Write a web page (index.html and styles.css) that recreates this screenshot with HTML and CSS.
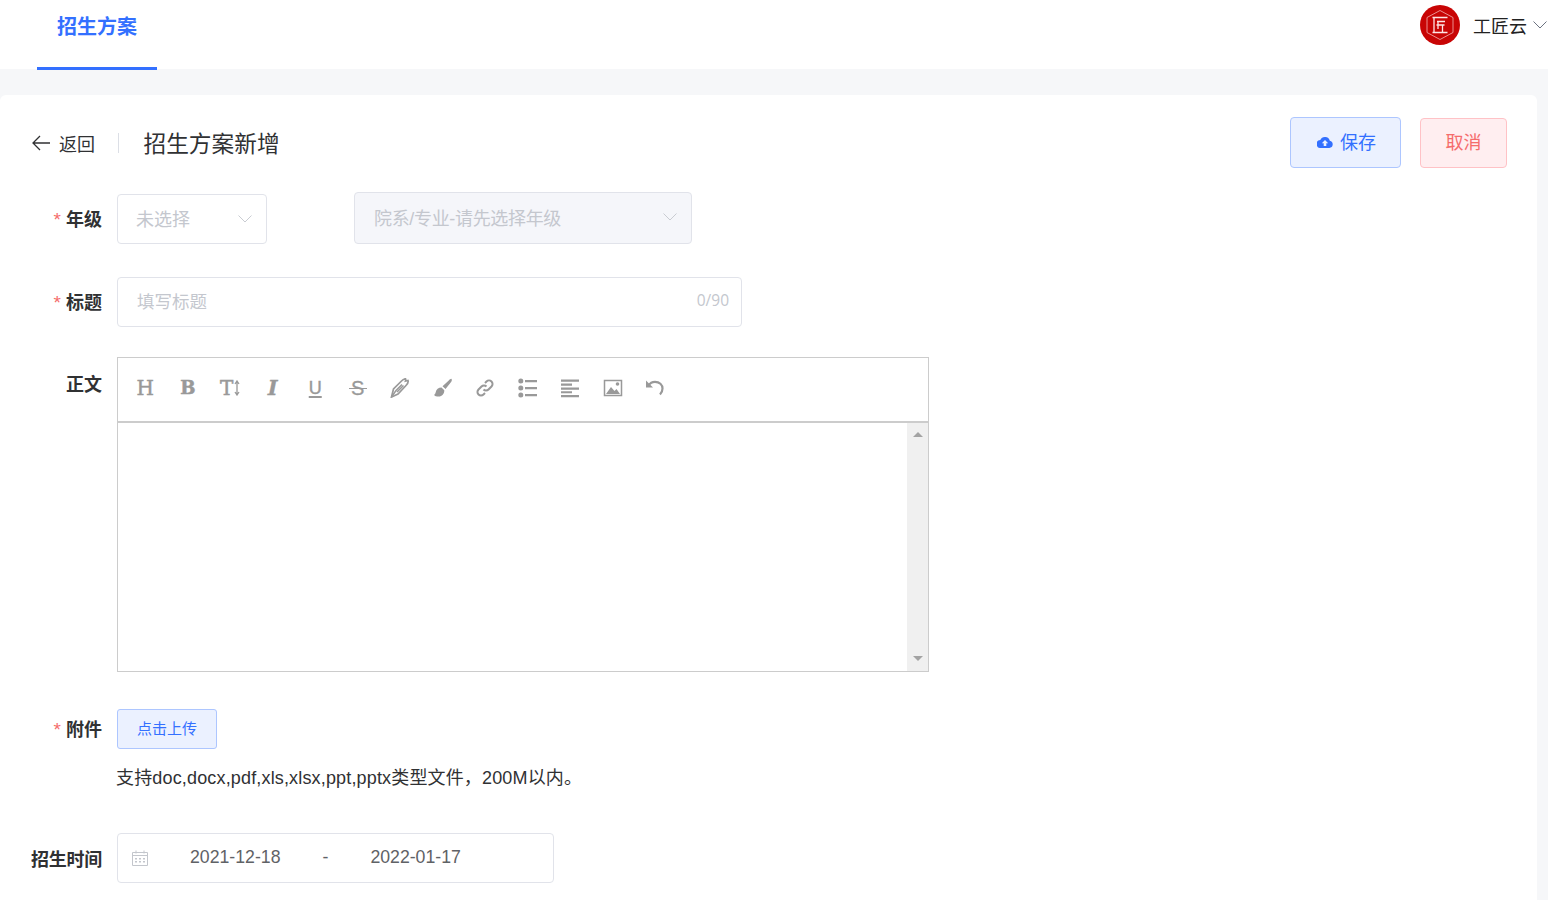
FILE: index.html
```html
<!DOCTYPE html>
<html lang="zh-CN">
<head>
    <meta charset="UTF-8">
    <title>招生方案新增</title>
    <link rel="stylesheet" href="styles.css">
</head>
<body>
    <header class="topbar">
        <a class="tab">招生方案</a>
        <div class="user">
            <svg class="avatar" viewBox="0 0 40 40">
                <circle cx="20" cy="20" r="20" fill="#c80505"/>
                <path d="M20 5.500 33 12.500v15L20 34.500 7 27.500v-15z" fill="none" stroke="#ea8f8f" stroke-width="1"/>
                <path d="M12.500 12.500h15M14 12.500v15M12.500 27.500h15M17 16.500h8M18 16.500v7.500M16.500 20h8M22.500 20v7.500" fill="none" stroke="#fde5e5" stroke-width="1.300"/>
            </svg>
            <span class="user-name">工匠云</span>
            <svg class="chevron chevron-dark" viewBox="0 0 14 8"><path d="M.5.5 7 7l6.500-6.500"/></svg>
        </div>
    </header>

    <main class="card">
        <div class="page-head">
            <a class="back">
                <svg class="back-arrow" viewBox="0 0 18 16"><path d="M8 1 1 8l7 7M1 8h17"/></svg>
                返回
            </a>
            <h1 class="page-title">招生方案新增</h1>
            <div class="actions">
                <button class="btn btn-save">
                    <svg class="cloud" viewBox="0 0 16 12"><path d="M12.800 4.700A5 4.700 0 0 0 3.300 4 3.900 3.900 0 0 0 4 12h8.300a3.700 3.700 0 0 0 .5-7.300zM9.300 7.300V10H6.700V7.300H4.800L8 4.100l3.200 3.200z"/></svg>
                    保存
                </button>
                <button class="btn btn-cancel">取消</button>
            </div>
        </div>

        <div class="row row-grade">
            <label class="label required">年级</label>
            <div class="select select-grade">
                <span>未选择</span>
                <svg class="chevron" viewBox="0 0 14 8"><path d="M.5.5 7 7l6.500-6.500"/></svg>
            </div>
            <div class="select select-major">
                <span>院系/专业-请先选择年级</span>
                <svg class="chevron" viewBox="0 0 14 8"><path d="M.5.5 7 7l6.500-6.500"/></svg>
            </div>
        </div>

        <div class="row row-title">
            <label class="label required">标题</label>
            <div class="input-title">
                <span class="placeholder">填写标题</span>
                <span class="count">0/90</span>
            </div>
        </div>

        <div class="row row-editor">
            <label class="label">正文</label>
            <div class="editor">
                <div class="toolbar">
                    <span class="tool tool-heavy">H</span>
                    <span class="tool tool-bold">B</span>
                    <span class="tool tool-heavy">T<svg class="updown" viewBox="0 0 6 16"><path d="M3 1v14M1 4l2-3 2 3M1 12l2 3 2-3"/></svg></span>
                    <span class="tool tool-italic">I</span>
                    <span class="tool tool-under">U</span>
                    <span class="tool tool-strike">S</span>
                    <span class="tool"><svg class="icon" viewBox="0 0 20 20"><path d="M1.500 19 3.500 11 11.500 3c1.500-1.500 3-2 4-2.300.4 1 .3 1.500 0 2.300l2.500-.5c.5 1.500-.5 3.500-2 5l-8 8.500z" fill="none" stroke="#999" stroke-width="1.700"/><path d="M1.500 19 6 12.500l6-6M7 14l6.500-6.500" fill="none" stroke="#999" stroke-width="1.500"/></svg></span>
                    <span class="tool"><svg class="icon" viewBox="0 0 20 20"><path d="M18.500 1c.8.8.3 2.200-1 3.800l-5 6.200-3-2.800 6-5.500C17 1.300 18 .5 18.500 1z" fill="#999"/><path d="M8.500 9.500l2.800 2.700c.2 3.500-2.500 6.300-5.500 6.300-2 0-4.500-.5-4.500-1.500 0-.8 1-.8 1.400-2.800.5-2.800 2.800-4.700 5.800-4.700z" fill="#999"/></svg></span>
                    <span class="tool"><svg class="icon" viewBox="0 0 20 20"><path d="M8.500 11.500a3.500 3.500 0 0 0 5 0l3-3a3.500 3.500 0 0 0-5-5l-1.500 1.500M11.500 8.500a3.500 3.500 0 0 0-5 0l-3 3a3.500 3.500 0 0 0 5 5l1.500-1.500" fill="none" stroke="#999" stroke-width="2"/></svg></span>
                    <span class="tool"><svg class="icon" viewBox="0 0 20 20"><circle cx="2.800" cy="3" r="2.500" fill="#999"/><circle cx="2.800" cy="10" r="2.500" fill="#999"/><circle cx="2.800" cy="17" r="2.500" fill="#999"/><path d="M7 2h12v2.200H7zM7 9h12v2.200H7zM7 16h12v2.200H7z" fill="#999"/></svg></span>
                    <span class="tool"><svg class="icon" viewBox="0 0 20 20"><path d="M1 1.500h18v2.200H1zM1 5.500h11v2.200H1zM1 9.500h18v2.200H1zM1 13.200h11v2H1zM1 17h18v2.200H1z" fill="#999"/></svg></span>
                    <span class="tool"><svg class="icon" viewBox="0 0 20 20"><path d="M1.500 2.500h17v15h-17z" fill="none" stroke="#999" stroke-width="1.500"/><path d="M3 16l5-7 3.500 4 2-2 3.500 5z" fill="#999"/><circle cx="14.500" cy="6" r="1.800" fill="#999"/></svg></span>
                    <span class="tool"><svg class="icon" viewBox="0 0 20 20"><path d="M1 2.500v7h7z" fill="#999"/><path d="M3.500 7.500C5 5 7.500 3.800 10 3.800c4.500 0 7.500 3 7.500 6.700 0 2.500-1 4.500-2.500 6" fill="none" stroke="#999" stroke-width="2.200"/></svg></span>
                </div>
                <div class="editor-body">
                    <div class="scrollbar">
                        <i class="arrow-up"></i>
                        <i class="arrow-down"></i>
                    </div>
                </div>
            </div>
        </div>

        <div class="row row-upload">
            <label class="label required">附件</label>
            <button class="btn-upload">点击上传</button>
        </div>
        <p class="hint">支持doc,docx,pdf,xls,xlsx,ppt,pptx类型文件，200M以内。</p>

        <div class="row row-date">
            <label class="label">招生时间</label>
            <div class="date-range">
                <svg class="calendar" viewBox="0 0 16 16">
                    <path d="M.5 2.500h15v13H.5zM.5 5.500h15M4 .5v3M12 .5v3" fill="none" stroke="#c3c6cc"/>
                    <path d="M3 8h2v1.500H3zM7 8h2v1.500H7zM11 8h2v1.500h-2zM3 11h2v1.500H3zM7 11h2v1.500H7zM11 11h2v1.500h-2z" fill="#c3c6cc"/>
                </svg>
                <span class="date-start">2021-12-18</span>
                <span class="date-sep">-</span>
                <span class="date-end">2022-01-17</span>
            </div>
        </div>
    </main>
</body>
</html>
```

FILE: styles.css
```css
* {
    box-sizing: border-box;
}

html, body {
    height: 900px;
    overflow: hidden;
}

body {
    margin: 0;
    background: #f6f7f9;
    color: #303133;
    font-family: "Liberation Sans", "Noto Sans CJK SC", sans-serif;
    font-size: 18px;
}

button {
    font-family: inherit;
    cursor: pointer;
}

/* Top bar */
.topbar {
    height: 69px;
    background: #fff;
    display: flex;
    justify-content: space-between;
    padding-left: 37px;
}

.tab {
    width: 120px;
    height: 70px;
    border-bottom: 3px solid #3370ff;
    color: #3370ff;
    font-size: 20px;
    font-weight: 700;
    text-align: center;
    line-height: 54px;
}

.user {
    display: flex;
    align-items: center;
    height: 50px;
}

.avatar {
    width: 40px;
    height: 40px;
    margin-right: 13px;
}

.user-name {
    color: #222;
    margin-right: 6px;
}

.chevron {
    width: 14px;
    height: 8px;
    fill: none;
    stroke: #c9ccd2;
    stroke-width: 1;
}

.chevron-dark {
    stroke: #6b7280;
    margin-right: 1px;
}

/* Card */
.card {
    width: 1537px;
    height: 805px;
    margin-top: 26px;
    background: #fff;
    border-radius: 6px 6px 0 0;
    padding-top: 22px;
}

.page-head {
    display: flex;
    align-items: center;
    height: 51px;
    padding: 0 30px 0 32px;
}

.back {
    display: flex;
    align-items: center;
    width: 87px;
    height: 20px;
    border-right: 1px solid #dcdfe6;
    color: #303133;
}

.back-arrow {
    width: 18px;
    height: 16px;
    margin-right: 9px;
    fill: none;
    stroke: #303133;
    stroke-width: 1.300;
}

.page-title {
    margin: 0 0 0 24.500px;
    font-size: 22.700px;
    font-weight: 400;
    color: #303133;
}

.actions {
    margin-left: auto;
    display: flex;
    align-items: center;
    gap: 19px;
}

.btn {
    height: 50px;
    border-radius: 4px;
    font-size: 18px;
    padding: 0 0 4px;
}

.btn-save {
    width: 111px;
    height: 51px;
    background: #ebf1ff;
    border: 1px solid #adc6ff;
    color: #3370ff;
    display: flex;
    align-items: center;
    justify-content: center;
    gap: 7px;
    padding-left: 2px;
}

.cloud {
    width: 16px;
    height: 12px;
    margin-top: 3px;
    fill: #3370ff;
}

.btn-cancel {
    width: 87px;
    background: #ffeef0;
    border: 1px solid #ffc2c6;
    color: #f56c6c;
}

/* Form rows */
.row {
    display: flex;
}

.label {
    width: 102px;
    flex: none;
    margin-right: 15px;
    text-align: right;
    font-weight: 700;
    color: #303133;
}

.required::before {
    content: "*";
    color: #f56c6c;
    font-size: 19px;
    font-weight: 400;
    margin-right: 5px;
}

.row-grade {
    margin-top: 24px;
    height: 52px;
    align-items: center;
}

.select {
    display: flex;
    align-items: center;
    justify-content: space-between;
    border: 1px solid #e1e3ea;
    border-radius: 4px;
    color: #c4c7ce;
}

.select span {
    padding-bottom: 3px;
}

.select-grade {
    width: 150px;
    height: 50px;
    padding: 0 14px 0 18px;
    margin-top: 2px;
}

.select-major {
    width: 338px;
    height: 52px;
    margin-left: 87px;
    padding: 0 14px 0 19px;
    background: #f5f6fa;
    letter-spacing: -0.330px;
}

.select-major .chevron {
    margin-top: -3px;
}

.row-grade .label {
    margin-top: -1px;
}

.row-title {
    margin-top: 33px;
    align-items: center;
}

.row-title .label {
    margin-top: -3px;
}

.input-title {
    width: 625px;
    height: 50px;
    display: flex;
    align-items: center;
    justify-content: space-between;
    padding: 0 12px 0 19px;
    border: 1px solid #e1e3ea;
    border-radius: 4px;
    color: #c4c7ce;
}

.placeholder {
    font-size: 17.500px;
    padding-bottom: 3px;
}

.count {
    font-family: "Open Sans", sans-serif;
    font-size: 15.500px;
    padding-bottom: 4px;
}

/* Editor */
.row-editor {
    margin-top: 30px;
}

.row-editor .label {
    padding-top: 13px;
}

.editor {
    width: 812px;
    height: 315px;
    border: 1px solid #ccc;
    display: flex;
    flex-direction: column;
}

.toolbar {
    height: 65px;
    flex: none;
    border-bottom: 2px solid #ccc;
    display: flex;
    align-items: center;
    padding: 0 0 4px 6px;
}

.tool {
    width: 42.500px;
    height: 24px;
    display: flex;
    align-items: center;
    justify-content: center;
    color: #999;
    font-size: 20px;
    line-height: 24px;
}

.tool-heavy {
    font-family: "DejaVu Serif", serif;
    -webkit-text-stroke: 0.500px #999;
}

.tool-bold {
    font-family: "DejaVu Serif", serif;
    font-weight: 700;
    font-size: 18px;
    -webkit-text-stroke: 0.500px #999;
}

.tool-italic {
    font-family: "DejaVu Serif", serif;
    font-style: italic;
    font-weight: 700;
    font-size: 21px;
    -webkit-text-stroke: 0.300px #999;
}

.tool-under {
    font-size: 18px;
    -webkit-text-stroke: 0.400px #999;
    text-decoration: underline;
    text-decoration-thickness: 2px;
    text-underline-offset: 2px;
}

.tool-strike {
    position: relative;
    font-size: 20px;
    -webkit-text-stroke: 0.300px #999;
}

.tool-strike::after {
    content: "";
    position: absolute;
    left: 12px;
    right: 12px;
    top: 12px;
    height: 1.500px;
    background: #999;
}

.updown {
    width: 6px;
    height: 16px;
    margin-left: 1px;
    fill: none;
    stroke: #999;
    stroke-width: 1.300;
}

.icon {
    width: 20px;
    height: 20px;
}

.editor-body {
    flex: 1;
    display: flex;
    justify-content: flex-end;
}

.scrollbar {
    width: 21px;
    background: #f0f0f0;
    display: flex;
    flex-direction: column;
    justify-content: space-between;
    align-items: center;
    padding: 9px 0 10px;
}

.arrow-up,
.arrow-down {
    width: 0;
    height: 0;
    border-left: 5px solid transparent;
    border-right: 5px solid transparent;
}

.arrow-up {
    border-bottom: 5px solid #a3a3a3;
}

.arrow-down {
    border-top: 5px solid #a3a3a3;
}

/* Upload */
.row-upload {
    margin-top: 37px;
    align-items: center;
}

.row-upload .label {
    margin-top: -3px;
}

.btn-upload {
    width: 100px;
    height: 40px;
    padding: 0 0 3px;
    background: #ebf1ff;
    border: 1px solid #adc6ff;
    border-radius: 3px;
    color: #3370ff;
    font-size: 15px;
}

.hint {
    margin: 16px 0 0 116px;
    line-height: 26px;
    font-size: 18px;
    letter-spacing: 0.160px;
    color: #303133;
}

/* Date range */
.row-date {
    margin-top: 42px;
    align-items: center;
}

.row-date .label {
    letter-spacing: -0.250px;
}

.date-range {
    width: 437px;
    height: 50px;
    display: flex;
    align-items: center;
    border: 1px solid #e1e3ea;
    border-radius: 4px;
    color: #5f6266;
    padding-left: 14px;
    font-size: 17.700px;
}

.date-range span {
    padding-bottom: 2px;
}

.calendar {
    width: 16px;
    height: 16px;
}

.date-start {
    margin-left: 42px;
}

.date-sep {
    margin-left: 42px;
}

.date-end {
    margin-left: 42px;
}
```
